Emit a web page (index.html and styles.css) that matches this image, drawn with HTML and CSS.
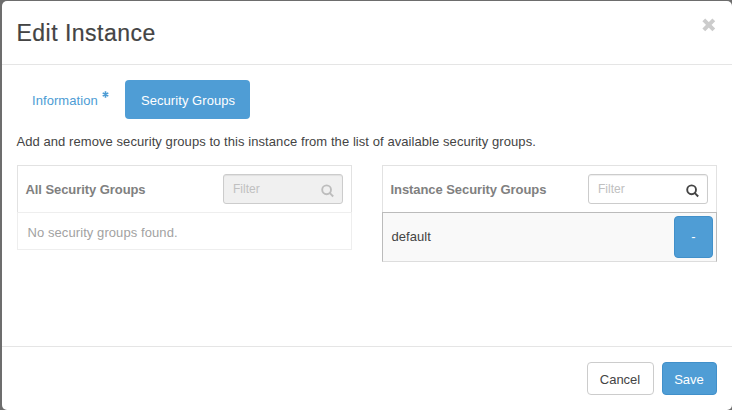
FILE: index.html
```
<!DOCTYPE html>
<html lang="en">
<head>
<meta charset="utf-8">
<title>Edit Instance</title>
<link rel="stylesheet" href="styles.css">
</head>
<body>
<div class="modal">
  <header class="modal-header">
    <h3>Edit Instance</h3>
    <button class="close" aria-label="Close"><svg width="16" height="16" viewBox="0 0 16 16"><path d="M2.8 2.8l10 10M12.8 2.8l-10 10"/></svg></button>
  </header>
  <main class="modal-body">
    <nav class="tabs">
      <a class="tab info">Information<svg class="required" width="7" height="7" viewBox="0 0 6 6"><path d="M3 .2v5.6M.6 1.6l4.8 2.8M5.4 1.6L.6 4.4"/></svg></a>
      <a class="tab active">Security Groups</a>
    </nav>
    <p class="help">Add and remove security groups to this instance from the list of available security groups.</p>
    <div class="columns">
      <section class="panel">
        <div class="panel-head">
          <strong>All Security Groups</strong>
          <label class="filter disabled"><span>Filter</span><svg width="13" height="14" viewBox="0 0 13 14"><circle cx="5.6" cy="5.8" r="4.4"/><path d="M8.6 8.8l3.6 3.7"/></svg></label>
        </div>
        <div class="empty">No security groups found.</div>
      </section>
      <section class="panel">
        <div class="panel-head">
          <strong>Instance Security Groups</strong>
          <label class="filter"><span>Filter</span><svg width="13" height="14" viewBox="0 0 13 14"><circle cx="5.6" cy="5.8" r="4.4"/><path d="M8.6 8.8l3.6 3.7"/></svg></label>
        </div>
        <div class="member"><span>default</span><button class="btn primary remove">-</button></div>
      </section>
    </div>
  </main>
  <footer class="modal-footer">
    <button class="btn cancel">Cancel</button>
    <button class="btn primary save">Save</button>
  </footer>
</div>
</body>
</html>
```
FILE: styles.css
```
* { box-sizing: border-box; }
body {
  margin: 0;
  height: 410px;
  padding: 1px 0 0 2px;
  overflow: hidden;
  background: #6d6d6d;
  color: #444;
  font: 13px/18px "Liberation Sans", Arial, sans-serif;
}
button { font: inherit; }
.modal {
  display: flex;
  flex-direction: column;
  height: 409px;
  background: #fff;
  border-radius: 5px;
}
.modal-header {
  display: flex;
  justify-content: space-between;
  height: 64px;
  padding: 16px 15px 0 14.5px;
  border-bottom: 1px solid #e5e5e5;
}
h3 {
  margin: 0;
  font-size: 23px;
  line-height: 32px;
  font-weight: 400;
  letter-spacing: .48px;
  -webkit-text-stroke: .2px #444;
}
.close { width: 16px; height: 16px; padding: 0; border: 0; background: none; }
.close svg { display: block; fill: none; stroke: #ccc; stroke-width: 4; }
.modal-body { flex: 1; padding: 15px 15px 0; }
.tabs { display: flex; gap: 2px; height: 39px; }
.tab {
  display: flex;
  padding: 12px 0 0 16px;
  color: #4d9cd4;
  border-radius: 4px;
  white-space: nowrap;
}
.info { width: 106px; padding-left: 15px; letter-spacing: .07px; }
.required { margin: -1.5px 0 0 4px; fill: none; stroke: #4d9cd4; stroke-width: 1.4; }
.tab.active { width: 125px; background: #4f9dd5; color: #fff; letter-spacing: .06px; }
.help { margin: 14px 0 0 -.5px; height: 18px; white-space: nowrap; letter-spacing: .07px; }
.columns { display: grid; grid-template-columns: 335px 335px; gap: 30px; margin-top: 14px; }
.panel-head {
  display: flex;
  justify-content: space-between;
  height: 47px;
  padding: 8px 8px 0 7.5px;
  border: 1px solid #e2e2e2;
  border-bottom: 0;
}
.panel-head strong { padding-top: 7px; color: #808080; letter-spacing: -.07px; }
.filter {
  display: flex;
  justify-content: space-between;
  width: 120px;
  height: 30px;
  padding: 5px 8px 0 9px;
  border: 1px solid #ccc;
  border-radius: 3px;
  font-size: 12px;
  background: #fff;
  color: #c0c0c0;
  box-shadow: inset 0 1px 1px rgba(0, 0, 0, .07);
}
.filter svg { margin-top: 4px; fill: none; stroke: #444; stroke-width: 1.9; }
.filter.disabled { background: #f0f0f0; }
.disabled svg { stroke: #bdbdbd; }
.empty { height: 38px; padding: 11px 9.5px 0; border: 1px solid #eee; color: #a2a2a2; letter-spacing: .08px; }
.member {
  display: flex;
  justify-content: space-between;
  height: 50px;
  padding: 3px 3px 0 8.5px;
  border: 1px solid #bbb;
  border-bottom-color: #ddd;
  background: #f9f9f9;
}
.member span { padding-top: 12px; letter-spacing: .05px; }
.btn {
  padding: 0;
  border: 1px solid #ccc;
  border-radius: 4px;
  background: #fff;
  color: #444;
}
.btn.primary { border-color: #4190ca; background: #4f9dd5; color: #fff; }
.remove { width: 39px; height: 42px; }
.modal-footer {
  display: flex;
  justify-content: flex-end;
  gap: 8px;
  height: 64px;
  padding: 15px 15px 0;
  border-top: 1px solid #e5e5e5;
}
.cancel { width: 67px; height: 33px; padding: 2px 1px 0 0; }
.save { width: 55px; height: 33px; padding: 2px 1px 0 0; }
```
